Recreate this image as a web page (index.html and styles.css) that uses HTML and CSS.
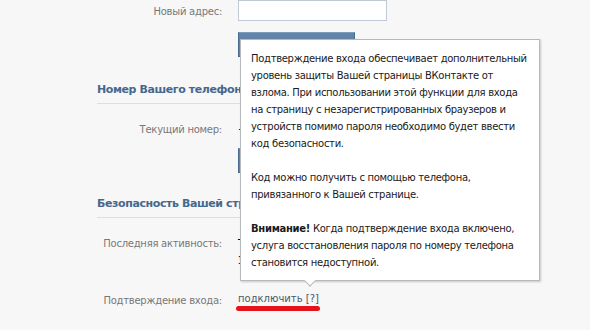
FILE: index.html
```html
<!DOCTYPE html>
<html lang="ru">
<head>
    <meta charset="UTF-8">
    <title>Настройки</title>
    <link rel="stylesheet" href="styles.css">
</head>
<body>
    <div class="settings">
        <div class="row row-first">
            <div class="label">Новый адрес:</div>
            <div class="value"><input type="text" class="text-input"></div>
        </div>
        <div class="row">
            <div class="label"></div>
            <div class="value"><button class="button">Сохранить адрес</button></div>
        </div>

        <h2 class="section-title">Номер Вашего телефона</h2>
        <div class="row row-phone">
            <div class="label">Текущий номер:</div>
            <div class="value">+7 *** *** ** 45</div>
        </div>
        <div class="row">
            <div class="label"></div>
            <div class="value"><button class="button">Изменить номер</button></div>
        </div>

        <h2 class="section-title section-security">Безопасность Вашей страницы</h2>
        <div class="row row-activity">
            <div class="label">Последняя активность:</div>
            <div class="value">Только что<br>Завершить все сеансы</div>
        </div>
        <div class="row row-confirm">
            <div class="label">Подтверждение входа:</div>
            <div class="value">
                <div class="confirm-link">
                    <a href="#" class="link">подключить [?]</a>
                    <div class="marker"></div>
                    <div class="tooltip">
                        <p>Подтверждение входа обеспечивает дополнительный уровень защиты Вашей страницы ВКонтакте от взлома. При использовании этой функции для входа на страницу с незарегистрированных браузеров и устройств помимо пароля необходимо будет ввести код безопасности.</p>
                        <p>Код можно получить с помощью телефона, привязанного к Вашей странице.</p>
                        <p><b>Внимание!</b> Когда подтверждение входа включено, услуга восстановления пароля по номеру телефона становится недоступной.</p>
                    </div>
                </div>
            </div>
        </div>
    </div>
</body>
</html>
```

FILE: styles.css
```css
body {
    margin: 0;
    background: #f7f7f7;
    font-family: "DejaVu Sans", Tahoma, sans-serif;
    font-size: 10px;
    letter-spacing: -0.45px;
    color: #000;
    overflow: hidden;
}
.settings {
    width: 440px;
    padding-left: 97px;
}
.row {
    display: grid;
    grid-template-columns: 125px 1fr;
    column-gap: 16px;
    align-items: center;
    line-height: 17px;
}
.label {
    color: #777;
    text-align: right;
    letter-spacing: -0.25px;
}
.row-first {
    height: 22px;
}
.text-input {
    display: block;
    width: 149px;
    height: 21px;
    box-sizing: border-box;
    border: 1px solid #c0cad5;
    background: #fff;
    margin-top: -1px;
}
.button {
    display: block;
    margin-top: 10px;
    width: 117px;
    height: 25px;
    border: 1px solid #4a6b90;
    border-top-color: #7d9dbf;
    background: #6383a8;
    color: #fff;
    font-family: inherit;
    font-size: 10px;
}
.section-title {
    margin: 24px 0 0 0;
    padding-bottom: 4px;
    border-bottom: 1px solid #d8dfe6;
    font-size: 11px;
    letter-spacing: -0.4px;
    font-weight: bold;
    color: #45688e;
    line-height: 18px;
}
.section-security {
    margin-top: 22px;
}
.row-phone {
    margin-top: 17px;
}
.row-activity {
    margin-top: 17px;
    align-items: start;
}
.row-confirm {
    margin-top: 21px;
}
.confirm-link {
    position: relative;
    display: inline-block;
}
.link {
    display: block;
    color: #4d5866;
    text-decoration: none;
    letter-spacing: 0;
}
.marker {
    height: 5px;
    margin: -1px -1px 0 -2px;
    border-radius: 3px;
    background: #e5141b;
}
.tooltip {
    position: absolute;
    left: 2px;
    bottom: 30px;
    width: 278px;
    padding: 10px 10px 9px 10px;
    background: #fff;
    border: 1px solid #b5b8bc;
    box-shadow: 1px 1px 2px rgba(0, 0, 0, 0.2);
    line-height: 17px;
    letter-spacing: -0.3px;
    color: #1a1a1a;
}
.tooltip p {
    margin: 0 0 17px 0;
}
.tooltip p:last-child {
    margin-bottom: 0;
}
.tooltip::after {
    content: "";
    position: absolute;
    left: 65px;
    bottom: -5px;
    width: 7px;
    height: 7px;
    background: #fff;
    border-right: 1px solid #b5b8bc;
    border-bottom: 1px solid #b5b8bc;
    transform: rotate(45deg);
}
```
